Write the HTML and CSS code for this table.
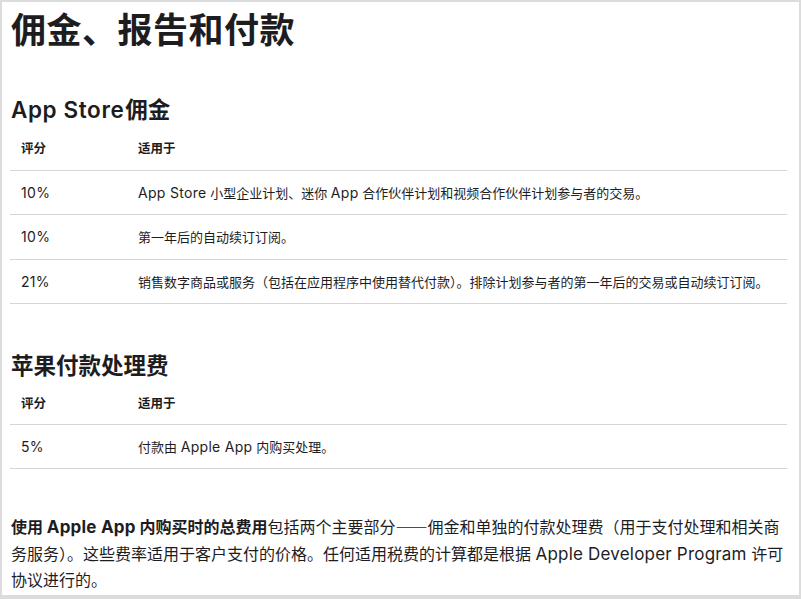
FILE: index.html
```html
<!DOCTYPE html>
<html lang="zh-CN">
<head>
<meta charset="utf-8">
<title>佣金、报告和付款</title>
<link rel="stylesheet" href="styles.css">
</head>
<body>
<div class="frame">
  <h1 class="title">佣金、报告和付款</h1>

  <section class="section first">
    <h2 class="heading"><span class="en">App Store</span>佣金</h2>
    <table class="rates">
      <thead>
        <tr><th class="c1">评分</th><th>适用于</th></tr>
      </thead>
      <tbody>
        <tr><td class="c1 en">10%</td><td><span class="en">App Store</span> 小型企业计划、迷你 <span class="en">App</span> 合作伙伴计划和视频合作伙伴计划参与者的交易。</td></tr>
        <tr><td class="c1 en">10%</td><td>第一年后的自动续订订阅。</td></tr>
        <tr><td class="c1 en">21%</td><td>销售数字商品或服务（包括在应用程序中使用替代付款）。排除计划参与者的第一年后的交易或自动续订订阅。</td></tr>
      </tbody>
    </table>
  </section>

  <section class="section second">
    <h2 class="heading">苹果付款处理费</h2>
    <table class="rates">
      <thead>
        <tr><th class="c1">评分</th><th>适用于</th></tr>
      </thead>
      <tbody>
        <tr><td class="c1 en">5%</td><td>付款由 <span class="en">Apple App</span> 内购买处理。</td></tr>
      </tbody>
    </table>
  </section>

  <p class="note"><strong>使用 <span class="en">Apple App</span> 内购买时的总费用</strong>包括两个主要部分<span class="cjk">——</span>佣金和单独的付款处理费（用于支付处理和相关商务服务）。这些费率适用于客户支付的价格。任何适用税费的计算都是根据 <span class="en">Apple Developer Program</span> 许可协议进行的。</p>
</div>
</body>
</html>
```

FILE: styles.css
```css
* { box-sizing: border-box; }

html, body {
  margin: 0;
  padding: 0;
  background: #ffffff;
}

body {
  font-family: Inter, "Noto Sans CJK SC", sans-serif;
  color: #1d1d1f;
}

.cjk {
  font-family: "Noto Sans CJK SC", sans-serif;
}

.frame {
  width: 801px;
  height: 599px;
  overflow: hidden;
  border: 2px solid #dcdcdc;
  border-bottom-width: 4px;
  padding: 0 12px 0 8px;
}

.title {
  margin: 6px 0 0 1px;
  font-size: 35px;
  line-height: 44px;
  font-weight: 700;
  letter-spacing: 0.5px;
}

.section.first {
  margin-top: 43px;
}

.section.second {
  margin-top: 47px;
}

.heading {
  margin: 0 0 0 1px;
  font-size: 22.5px;
  line-height: 30px;
  font-weight: 600;
}

.heading .en {
  letter-spacing: 0.6px;
  margin-right: 1px;
}

.rates {
  width: 100%;
  border-collapse: collapse;
  table-layout: fixed;
}

.rates th,
.rates td {
  text-align: left;
  padding: 0 0 0 11px;
  vertical-align: middle;
  white-space: nowrap;
}

.rates th {
  font-size: 12.5px;
  font-weight: 700;
  height: 45px;
  border-bottom: 1px solid #d6d6d6;
}

.second .rates th {
  height: 43px;
}

.rates td {
  font-size: 13px;
  height: 44.5px;
  border-bottom: 1px solid #d6d6d6;
}

.rates .en {
  font-size: 14px;
  letter-spacing: 0.3px;
}

.rates .c1 {
  width: 117px;
}

.note {
  margin: 44px 0 0 1px;
  font-size: 16px;
  line-height: 26.5px;
}

.note strong {
  font-weight: 700;
}

.note .en {
  font-size: 17px;
  letter-spacing: 0.2px;
}
```
